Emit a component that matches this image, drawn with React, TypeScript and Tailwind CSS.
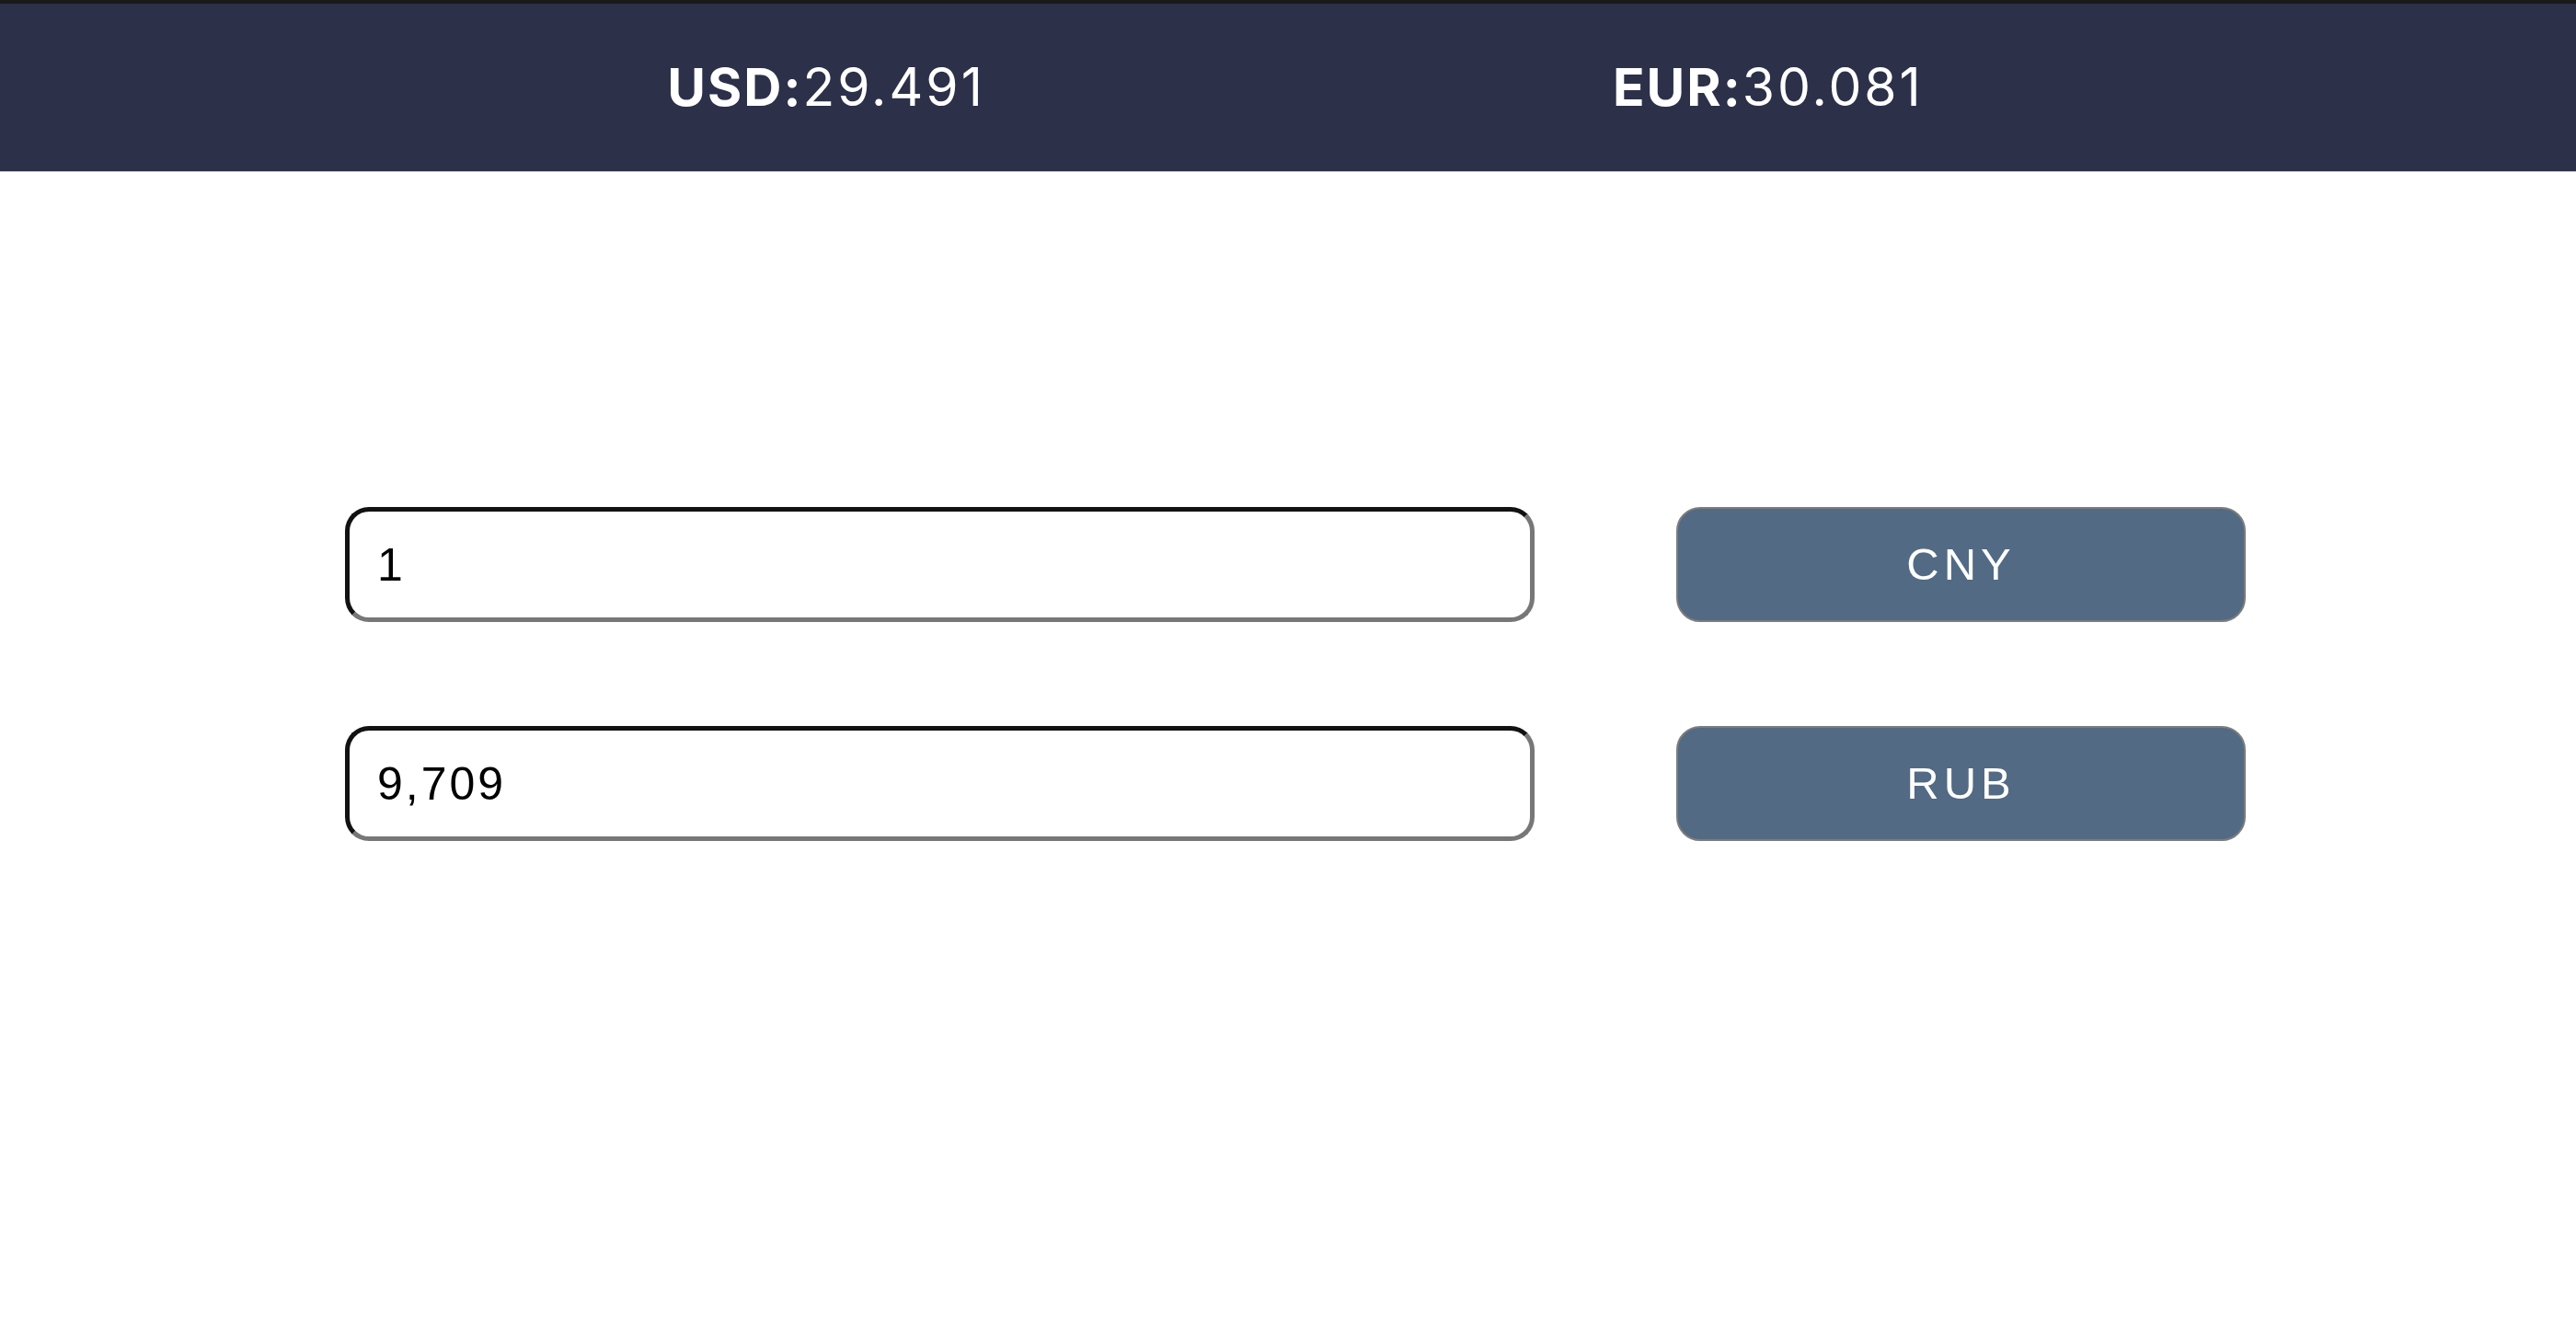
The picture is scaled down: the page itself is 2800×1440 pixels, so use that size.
import React, { useState } from 'react';

const RATES = [
  { code: 'USD', value: '29.491' },
  { code: 'EUR', value: '30.081' },
];

const inputClass =
  "w-[1293px] h-[125px] rounded-[26px] border-[5px] border-t-[#121212] border-l-[#121212] border-r-[#777777] border-b-[#777777] bg-white pl-[30px] text-[50px] tracking-[3px] text-black font-['Liberation_Sans',Arial,sans-serif] outline-none";

const buttonClass =
  "w-[619px] h-[125px] rounded-[26px] border-2 border-[#7d7d7d] bg-[#526a84] text-[49px] tracking-[5px] text-white font-['Liberation_Sans',Arial,sans-serif]";

const App: React.FC = () => {
  const [amount, setAmount] = useState('1');
  const [result, setResult] = useState('9,709');

  return (
    <div className="min-h-screen bg-white">
      {/* rates bar */}
      <header className="h-[187px] bg-[#2c3049] border-t-4 border-t-[#1a1a1a] border-b border-b-[#c3c9d8] flex items-center justify-center gap-[682px] pl-4 text-white font-['Inter',sans-serif] text-[57px] tracking-[2px]">
        {RATES.map((r) => (
          <div key={r.code} className="flex items-baseline">
            <span className="font-bold">{r.code}:</span>
            <span className="font-normal tracking-[3px]">{r.value}</span>
          </div>
        ))}
      </header>

      <main className="flex justify-center pl-4 pt-[364px]">
        <div className="flex flex-col gap-[113px]">
          <div className="flex gap-[154px]">
            <input
              type="text"
              value={amount}
              onChange={(e) => setAmount(e.target.value)}
              className={inputClass}
            />
            <button className={buttonClass}>CNY</button>
          </div>
          <div className="flex gap-[154px]">
            <input
              type="text"
              value={result}
              onChange={(e) => setResult(e.target.value)}
              className={inputClass}
            />
            <button className={buttonClass}>RUB</button>
          </div>
        </div>
      </main>
    </div>
  );
};

export default App;
